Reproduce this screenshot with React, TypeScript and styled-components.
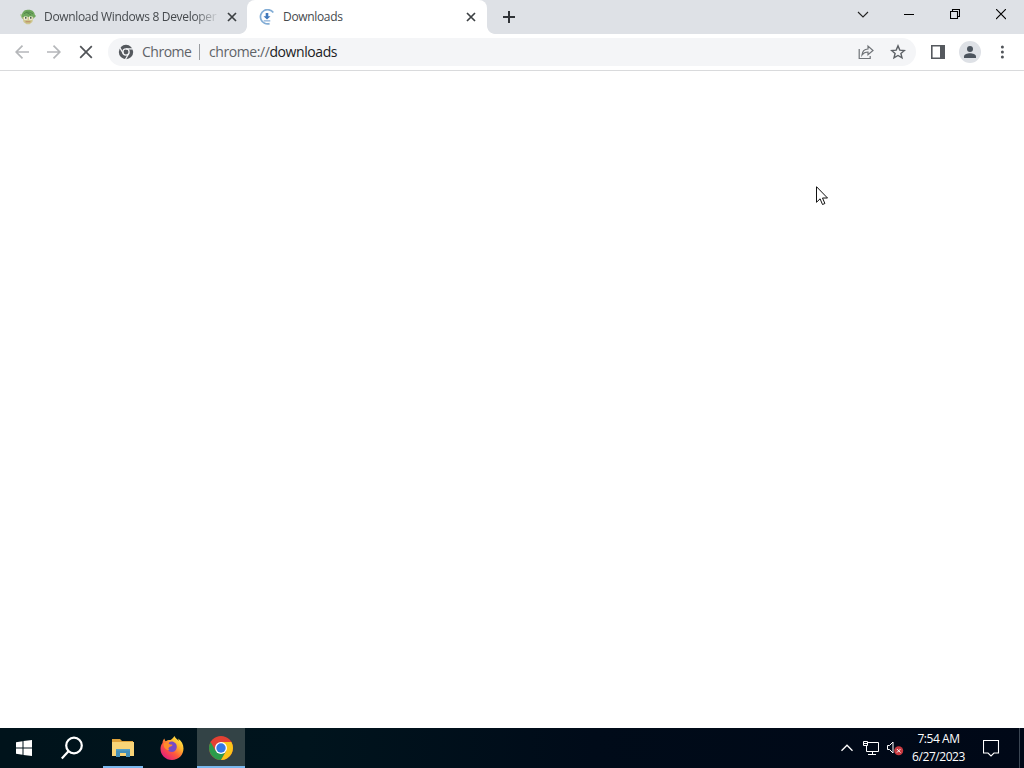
import React from 'react';
import styled, { createGlobalStyle } from 'styled-components';

const GlobalStyle = createGlobalStyle`
  * {
    box-sizing: border-box;
  }
  body {
    margin: 0;
    overflow: hidden;
    font-family: 'Open Sans', 'Noto Sans', sans-serif;
    cursor: default;
  }
  svg {
    display: block;
    flex: none;
  }
`;

const Desktop = styled.div`
  position: relative;
  width: 1024px;
  height: 768px;
  display: flex;
  flex-direction: column;
  background: #fff;
`;

const TabStrip = styled.header`
  height: 34px;
  display: flex;
  background: #dee1e6;
  padding-left: 8px;
`;

const Tab = styled.div<{ $active?: boolean }>`
  position: relative;
  width: ${(p) => (p.$active ? 240 : 239)}px;
  height: 34px;
  display: flex;
  align-items: center;
  padding-left: 12px;
  border-radius: 8px 8px 0 0;
  background: ${(p) => (p.$active ? '#fff' : 'transparent')};

  &::before,
  &::after {
    content: '';
    display: ${(p) => (p.$active ? 'block' : 'none')};
    position: absolute;
    bottom: 0;
    width: 8px;
    height: 8px;
  }
  &::before {
    left: -8px;
    background: radial-gradient(circle at 0 0, transparent 7.5px, #fff 8.2px);
  }
  &::after {
    right: -8px;
    background: radial-gradient(circle at 100% 0, transparent 7.5px, #fff 8.2px);
  }
`;

const TabTitle = styled.div<{ $fade?: boolean }>`
  width: 176px;
  margin: 0 7px 0 8px;
  overflow: hidden;
  white-space: nowrap;
  font-size: 12px;
  line-height: 18px;
  letter-spacing: -0.33px;
  color: #45494d;
  mask-image: ${(p) => (p.$fade ? 'linear-gradient(90deg, #000 150px, transparent 176px)' : 'none')};
`;

const NewTab = styled.div`
  width: 28px;
  height: 34px;
  margin-left: 8px;
  display: flex;
  align-items: center;
  justify-content: center;
`;

const WindowControls = styled.div`
  margin-left: auto;
  display: flex;
`;

const WindowButton = styled.div`
  width: 46px;
  height: 29px;
  display: flex;
  align-items: center;
  justify-content: center;
`;

const Toolbar = styled.div`
  height: 37px;
  display: flex;
  align-items: center;
  padding: 0 6px 1px;
  background: #fff;
  border-bottom: 1px solid #d9dadc;
`;

const ToolButton = styled.div`
  width: 32px;
  height: 28px;
  display: flex;
  align-items: center;
  justify-content: center;
`;

const Omnibox = styled.div`
  flex: 1;
  height: 28px;
  margin: 0 6px;
  padding: 0 2px 0 10px;
  display: flex;
  align-items: center;
  border-radius: 14px;
  background: #f4f5f7;
  font-size: 14px;
  line-height: 20px;
  color: #5f6368;
  white-space: pre;
`;

const SiteLabel = styled.span`
  width: 49px;
  margin-left: 8px;
  letter-spacing: -0.5px;
`;

const Divider = styled.span`
  width: 1px;
  height: 16px;
  margin: 0 9px 0 8px;
  background: #9a9da1;
`;

const Url = styled.span`
  flex: 1;
  letter-spacing: -0.42px;

  b {
    font-weight: 400;
    color: #202124;
  }
`;

const Avatar = styled.div`
  width: 22px;
  height: 22px;
  border-radius: 50%;
  background: #dee1e6;
  overflow: hidden;
`;

const Page = styled.main`
  flex: 1;
  background: #fff;
`;

const Taskbar = styled.footer`
  height: 40px;
  display: flex;
  background: linear-gradient(90deg, #00131b 0%, #00141d 30%, #000b19 58%, #000817 100%);
`;

const TaskButton = styled.div<{ $width: number; $active?: boolean; $line?: number }>`
  width: ${(p) => p.$width}px;
  display: flex;
  align-items: center;
  justify-content: center;
  background-color: ${(p) => (p.$active ? '#334346' : 'transparent')};
  background-image: linear-gradient(#79b8ee, #79b8ee);
  background-size: ${(p) => p.$line ?? 0}px 2px;
  background-position: center bottom;
  background-repeat: no-repeat;
`;

const Tray = styled.div`
  margin-left: auto;
  display: flex;
  align-items: center;
`;

const TrayIcon = styled.div`
  width: 24px;
  display: flex;
  justify-content: center;
`;

const Clock = styled.div`
  width: 64px;
  display: flex;
  flex-direction: column;
  align-items: center;
  font-size: 12px;
  line-height: 18px;
  letter-spacing: -0.45px;
  color: #fff;
  white-space: nowrap;
  padding: 0 1px 1px 0;
`;

const Notifications = styled.div`
  width: 40px;
  display: flex;
  justify-content: center;
`;

const ShowDesktop = styled.div`
  width: 5px;
  height: 40px;
  margin-left: 8px;
  border-left: 1px solid #3b4653;
`;

const Pointer = styled.svg`
  position: absolute;
  left: 816px;
  top: 186px;
`;

const CloseX: React.FC = () => (
  <svg width="10" height="10" viewBox="0 0 10 10" stroke="#3c4043" strokeWidth="1.7">
    <path d="M1 1l8 8M9 1L1 9" />
  </svg>
);

const TurtleIcon: React.FC = () => (
  <svg width="16" height="16" viewBox="0 0 16 16">
    <path d="M0 5.500l3-.5 1 4-2 .5z" fill="#a9c391" />
    <path d="M2 9.500C1 4 3.500.5 8 .7c4.200-.2 6.500 2 6.800 5L16 7l-2.500 2.500z" fill="#6fa75d" />
    <path d="M4 5c2-2.500 6-2.500 9 0M6 3l5 3" stroke="#52864b" fill="none" />
    <path d="M2.500 8h11l-1.200 5-2.800 2.200H6.500L3.500 13z" fill="#cdc78d" />
    <path d="M4 7.500h3.500v3.200H4zM9 7.500h3.500v3.200H9z" fill="#f1efdf" />
    <path d="M5 8h1.500v1.700H5zM10 8h1.500v1.700H10z" fill="#52634a" />
    <path d="M5.500 12.800h5" stroke="#b98360" />
  </svg>
);

const DownloadSpinner: React.FC = () => (
  <svg width="16" height="16" viewBox="0 0 16 16">
    <path d="M14.300 3.600A7.100 7.100 0 1 0 10.600 14.600" fill="none" stroke="#81acd5" strokeWidth="1.700" />
    <path d="M6.700 4h2.600v3.200h2.200L8 10.500 4.500 7.200h2.200z" fill="#4179bc" />
    <path d="M4.700 11.200h6.600v1.300H4.700z" fill="#8fb3da" />
  </svg>
);

const ChromeMono: React.FC = () => (
  <svg width="16" height="16" viewBox="0 0 24 24">
    <circle cx="12" cy="12" r="10.800" fill="#55595e" />
    <circle cx="12" cy="12" r="4.700" fill="#55595e" stroke="#f4f5f7" strokeWidth="2" />
    <path d="M12 7.300h11M7.900 14.300L2.500 5M16.100 14.300L10.700 24" stroke="#f4f5f7" strokeWidth="1.900" />
  </svg>
);

const ChromeColor: React.FC = () => (
  <svg width="24" height="24" viewBox="0 0 24 24">
    <circle cx="12" cy="12" r="12" fill="#e34133" />
    <path d="M1.608 6A12 12 0 0 0 12 24l5.200-9L12 12 6.800 15z" fill="#2b9b4b" />
    <path d="M12 24A12 12 0 0 0 22.392 6H12l5.200 9z" fill="#fbc519" />
    <circle cx="12" cy="12" r="6" fill="#fff" />
    <circle cx="12" cy="12" r="4.700" fill="#3478e5" />
  </svg>
);

const FirefoxIcon: React.FC = () => (
  <svg width="24" height="24" viewBox="0 0 24 24">
    <defs>
      <linearGradient id="fox" x1=".9" y1=".05" x2=".2" y2=".9">
        <stop offset="0" stopColor="#fff04d" />
        <stop offset=".35" stopColor="#ffb52d" />
        <stop offset=".65" stopColor="#ff583c" />
        <stop offset="1" stopColor="#e52279" />
      </linearGradient>
    </defs>
    <path
      d="M2.500 7C2.600 5 3.500 3.300 4.500 2.500c0 1.200.5 2 1.300 2.700C7 4.200 9 3.800 10.500 4c1.500-.8 3-2.500 3.800-4 1.200 2.400 3.200 3.200 4.300 5 0-.9-.1-1.700-.5-2.500C21.500 5 23.500 8 23.500 12.500 23.500 19 18.500 24 12 24S.5 19 .5 13c0-2.400.7-4.400 2-6z"
      fill="url(#fox)"
    />
    <path d="M9 6.500c1.200-1 3-1.200 4.600-.6 2.400.9 3.600 3.200 3.100 5.800-.5 2.700-2.500 4.300-4.900 4.300-2.200 0-3.800-1.100-4.300-3z" fill="#764ac7" />
    <path d="M3.500 7.500c1.700-.9 3.500-.8 5 0 1 1 2.400 1 4 1.300 0 1.700-2.300 1.700-3.600 2.600-.8.900-.4 2 .6 2.700-2.500.6-6-1.400-6-6.600z" fill="#ff8b2b" />
  </svg>
);

const FolderIcon: React.FC = () => (
  <svg width="22" height="20" viewBox="0 0 22 20">
    <path d="M0 1h8l2 2h11v15H0z" fill="#dfa23a" />
    <path d="M0 4h22v14H0z" fill="#f8d477" />
    <path d="M4 11h14v8h-4v-4H8v4H4z" fill="#438fb8" />
    <path d="M4 11h14v1.500H4z" fill="#559fc4" />
  </svg>
);

const App: React.FC = () => (
  <>
    <GlobalStyle />
    <Desktop>
      <TabStrip>
        <Tab>
          <TurtleIcon />
          <TabTitle $fade>Download Windows 8 Developer</TabTitle>
          <CloseX />
        </Tab>
        <Tab $active>
          <DownloadSpinner />
          <TabTitle>Downloads</TabTitle>
          <CloseX />
        </Tab>
        <NewTab>
          <svg width="12" height="12" viewBox="0 0 12 12" stroke="#303337" strokeWidth="2">
            <path d="M6 0v12M0 6h12" />
          </svg>
        </NewTab>
        <WindowControls>
          <WindowButton>
            <svg width="12" height="8" viewBox="0 0 12 8" fill="none" stroke="#222" strokeWidth="1.1">
              <path d="M1 1l5 5 5-5" />
            </svg>
          </WindowButton>
          <WindowButton>
            <svg width="10" height="11" viewBox="0 0 10 11" stroke="#000">
              <path d="M0 5.500h10" />
            </svg>
          </WindowButton>
          <WindowButton>
            <svg width="10" height="11" viewBox="0 0 10 11" fill="none" stroke="#000" strokeWidth="1.1">
              <path d="M.5 2.500h7v7h-7zM2.500 2.500v-2h7v7h-2" />
            </svg>
          </WindowButton>
          <WindowButton>
            <svg width="10" height="11" viewBox="0 0 10 11" stroke="#000" strokeWidth="1.1">
              <path d="M0 0l10 10M10 0L0 10" />
            </svg>
          </WindowButton>
        </WindowControls>
      </TabStrip>

      <Toolbar>
        <ToolButton>
          <svg width="14" height="14" viewBox="0 0 14 14" fill="none" stroke="#b5b7ba" strokeWidth="1.7">
            <path d="M14 7H1.500M7.500.7L1.200 7l6.300 6.300" />
          </svg>
        </ToolButton>
        <ToolButton>
          <svg width="14" height="14" viewBox="0 0 14 14" fill="none" stroke="#b5b7ba" strokeWidth="1.7">
            <path d="M0 7h12.500M6.500.7L12.800 7l-6.300 6.300" />
          </svg>
        </ToolButton>
        <ToolButton>
          <svg width="14" height="14" viewBox="0 0 14 14" stroke="#505357" strokeWidth="1.7">
            <path d="M1.200 1.200l11.600 11.600M12.800 1.200L1.200 12.800" />
          </svg>
        </ToolButton>
        <Omnibox>
          <ChromeMono />
          <SiteLabel>Chrome</SiteLabel>
          <Divider />
          <Url>
            chrome://<b>downloads</b>
          </Url>
          <ToolButton>
            <svg width="16" height="16" viewBox="0 0 16 16" fill="none" stroke="#707478" strokeWidth="1.2">
              <path d="M1.200 5v9.500h11V12" />
              <path d="M4 11c.3-4 2.400-5.800 6-6V2l5 4.500-5 4.300V8c-2.700 0-4.500.8-6 3z" />
            </svg>
          </ToolButton>
          <ToolButton>
            <svg width="16" height="16" viewBox="0 0 16 16" fill="none" stroke="#5c6065" strokeWidth="1.4">
              <path d="M8 1.900l1.800 4.200 4.600.4-3.500 3 1.100 4.400L8 11.500l-4 2.400 1.100-4.400-3.500-3 4.600-.4z" />
            </svg>
          </ToolButton>
        </Omnibox>
        <ToolButton>
          <svg width="14" height="14" viewBox="0 0 14 14">
            <path d="M.8.8h12.400v12.400H.8z" fill="#fff" stroke="#55595e" strokeWidth="1.600" />
            <path d="M9 0h5v14H9z" fill="#55595e" />
          </svg>
        </ToolButton>
        <ToolButton>
          <Avatar>
            <svg width="22" height="22" viewBox="0 0 22 22" fill="#4c545e">
              <circle cx="11" cy="8" r="3" />
              <path d="M5 17v-1.500c0-2 3.500-3.200 6-3.200s6 1.200 6 3.200V17z" />
            </svg>
          </Avatar>
        </ToolButton>
        <ToolButton>
          <svg width="4" height="14" viewBox="0 0 4 14" fill="#505459">
            <circle cx="2.400" cy="2" r="1.500" />
            <circle cx="2.400" cy="7" r="1.500" />
            <circle cx="2.400" cy="12" r="1.500" />
          </svg>
        </ToolButton>
      </Toolbar>

      <Page />

      <Taskbar>
        <TaskButton $width={48}>
          <svg width="16" height="16" viewBox="0 0 16 16" fill="#fff">
            <path d="M0 2.200L6.500 1.300v6.200H0zM7.500 1.100L16 0v7.500H7.500zM0 8.500h6.500v6.200L0 13.800zM7.500 8.500H16V16l-8.500-1.100z" />
          </svg>
        </TaskButton>
        <TaskButton $width={48}>
          <svg width="24" height="24" viewBox="0 0 24 24" fill="none" stroke="#fff" strokeWidth="2.2">
            <circle cx="14" cy="9.500" r="7.800" />
            <path d="M8.700 15.100L1.800 22.500" />
          </svg>
        </TaskButton>
        <TaskButton $width={54} $line={40}>
          <FolderIcon />
        </TaskButton>
        <TaskButton $width={44}>
          <FirefoxIcon />
        </TaskButton>
        {/* running windows start after a small gap */}
        <TaskButton $width={3} />
        <TaskButton $width={48} $line={48} $active>
          <ChromeColor />
        </TaskButton>
        <Tray>
          <TrayIcon>
            <svg width="12" height="8" viewBox="0 0 12 8" fill="none" stroke="#fff" strokeWidth="1.3">
              <path d="M.5 6.700L6 1.200l5.500 5.500" />
            </svg>
          </TrayIcon>
          <TrayIcon>
            <svg width="16" height="14" viewBox="0 0 16 14" fill="none" stroke="#fff">
              <path d="M5 1.500h10.500v9h-12V5M9.500 10.500v3M5 13.500h8M.5.500h4v4h-4zM1 2.500h3" />
            </svg>
          </TrayIcon>
          <TrayIcon>
            <svg width="17" height="16" viewBox="0 0 17 16" fill="none" stroke="#fff">
              <path d="M.5 5.500h2l3.500-3.500v11l-3.500-3.500h-2z" />
              <circle cx="11.700" cy="10.800" r="4.500" fill="#c83a40" stroke="none" />
              <path d="M10 9.100l3.400 3.400M13.400 9.100L10 12.500" />
            </svg>
          </TrayIcon>
          <Clock>
            <span>7:54 AM</span>
            <span>6/27/2023</span>
          </Clock>
          <Notifications>
            <svg width="17" height="17" viewBox="0 0 17 17" fill="none" stroke="#fff" strokeWidth="1.1">
              <path d="M.5.5h15v12.500h-4.500l-3 3-3-3H.5z" />
            </svg>
          </Notifications>
          <ShowDesktop />
        </Tray>
      </Taskbar>

      <Pointer width="12" height="20" viewBox="0 0 12 20">
        <path d="M.5.7v15.600l3.600-3.500 2.400 5.700 2.400-1-2.400-5.500h5z" fill="#fff" stroke="#111" />
      </Pointer>
    </Desktop>
  </>
);

export default App;
